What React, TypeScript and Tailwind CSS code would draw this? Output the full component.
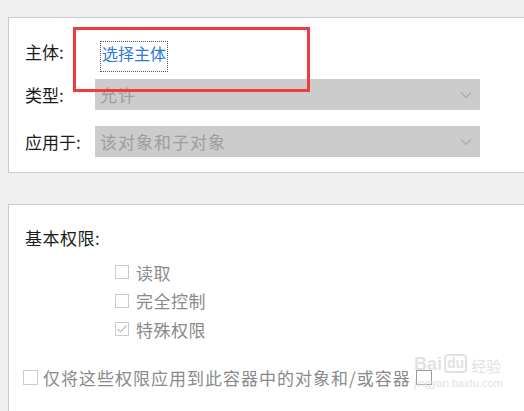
import { useState } from "react";

function Chevron() {
    return (
        <svg width="12" height="8" viewBox="0 0 12 8" className="shrink-0">
            <path d="M1 1.5 L6 6.5 L11 1.5" fill="none" stroke="#a9a9a9" strokeWidth="1.2" />
        </svg>
    )
}

function Select({ value }: { value: string }) {
    return (
        <div className="w-[385px] h-[31px] bg-[#cccccc] flex items-center justify-between pl-[5px] pr-[8px]">
            <span className="text-[17px] tracking-[1px] text-[#9d9d9d] leading-none">{value}</span>
            <Chevron />
        </div>
    )
}

function Box({ checked, size = "w-[14px] h-[14px]" }: { checked?: boolean, size?: string }) {
    return (
        <div className={`${size} border border-[#cbcbcb] bg-white flex items-center justify-center shrink-0`}>
            {checked && (
                <svg width="12" height="10" viewBox="0 0 12 10">
                    <path d="M1.5 5 L4.5 8 L10.5 1.5" fill="none" stroke="#bdbdbd" strokeWidth="1.2" />
                </svg>
            )}
        </div>
    )
}

export default function App() {
    const [perms] = useState([
        { name: "读取", checked: false },
        { name: "完全控制", checked: false },
        { name: "特殊权限", checked: true },
    ])

    return (
        <div className="relative w-[524px] h-[411px] overflow-hidden bg-[#f0f0f0] pt-[17px]" style={{ fontFamily: '"Noto Sans CJK SC", "Noto Sans", sans-serif' }}>
            <div className="ml-2 mr-[-10px] bg-white border border-[#cacaca] pl-4 pt-[23px] pb-[15px]">
                <div className="flex items-start h-[31px]">
                    <span className="w-[70px] text-[17px] leading-[22px] text-[#1b1b1b]">主体:</span>
                    <span className="ml-[5px] h-[31px] px-[1px] border border-dotted border-[#555] text-[16px] leading-[22px] text-[#2a78d8]">选择主体</span>
                </div>
                <div className="flex items-center mt-[7px]">
                    <span className="w-[70px] text-[17px] text-[#1b1b1b]">类型:</span>
                    <Select value="允许" />
                </div>
                <div className="flex items-center mt-[16px]">
                    <span className="w-[70px] text-[17px] text-[#1b1b1b]">应用于:</span>
                    <Select value="该对象和子对象" />
                </div>
            </div>

            <div className="ml-2 mr-[-10px] mt-[31px] h-[260px] bg-white border border-[#cacaca] pl-4 pt-[21px]">
                <div className="text-[17px] tracking-[0.5px] leading-[24px] text-[#1b1b1b]">基本权限:</div>
                <div className="mt-[8px] ml-[90px]">
                    {perms.map(p => (
                        <div key={p.name} className="flex items-center h-[28.5px] gap-[7px]">
                            <Box checked={p.checked} />
                            <span className="text-[17px] tracking-[0.5px] text-[#8a8a8a]">{p.name}</span>
                        </div>
                    ))}
                </div>
                <div className="flex items-center h-[28px] mt-[20px] ml-[-2px] gap-[5px]">
                    <Box size="w-[15px] h-[15px]" />
                    <span className="text-[17px] tracking-[1px] text-[#8a8a8a] whitespace-nowrap">仅将这些权限应用到此容器中的对象和/或容器</span>
                    <div className="w-[16px] h-[15px] border border-[#9a9a9a]" />
                </div>
            </div>

            {/* highlight box */}
            <div className="absolute left-[73px] top-[27px] w-[237px] h-[65px] border-[3px] border-[#f03c40]" />

            {/* watermark */}
            <div className="absolute left-[414px] top-[354px] text-[#e2e2e2] pointer-events-none">
                <div className="flex items-end gap-[2px]">
                    <span className="text-[18px] font-bold leading-none" style={{ fontFamily: '"Liberation Sans", sans-serif' }}>Bai</span>
                    <span className="border-[2px] border-[#e2e2e2] rounded-[4px] px-[1px] text-[14px] font-bold leading-[15px]" style={{ fontFamily: '"Liberation Sans", sans-serif' }}>du</span>
                    <span className="text-[15px] leading-none ml-[2px]">经验</span>
                </div>
                <div className="text-[11px] mt-[5px] leading-none" style={{ fontFamily: '"Liberation Sans", sans-serif' }}>jingyan.baidu.com</div>
            </div>
        </div>
    )
}
